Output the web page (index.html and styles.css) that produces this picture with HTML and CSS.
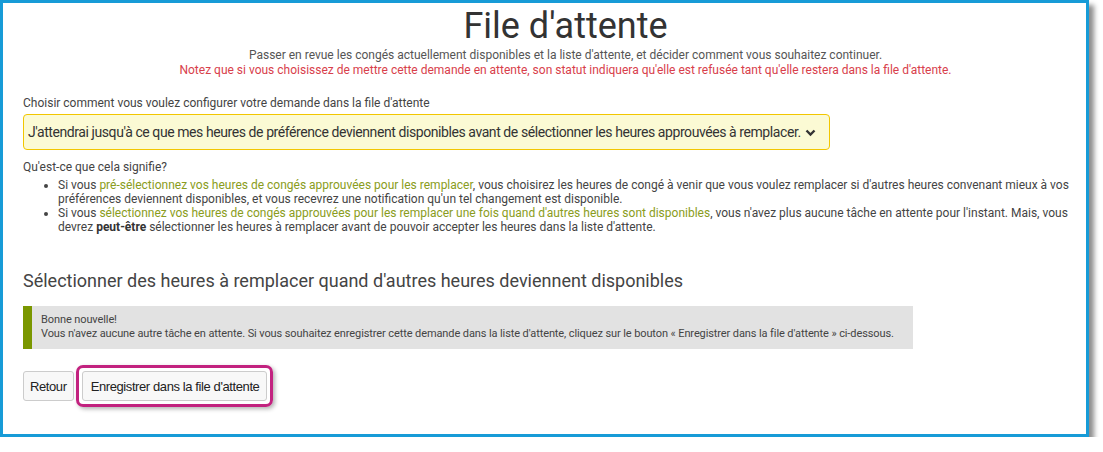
FILE: index.html
```html
<!DOCTYPE html>
<html lang="fr">
<head>
    <meta charset="UTF-8">
    <meta name="viewport" content="width=device-width, initial-scale=1.0">
    <title>File d'attente</title>
    <link rel="stylesheet" href="styles.css">
</head>
<body>
    <div class="frame">
        <div class="header">
            <h1>File d'attente</h1>
            <p class="intro">Passer en revue les congés actuellement disponibles et la liste d'attente, et décider comment vous souhaitez continuer.<br>
            <span class="warn">Notez que si vous choisissez de mettre cette demande en attente, son statut indiquera qu'elle est refusée tant qu'elle restera dans la file d'attente.</span></p>
        </div>

        <p class="label">Choisir comment vous voulez configurer votre demande dans la file d'attente</p>
        <div class="select">
            <span>J'attendrai jusqu'à ce que mes heures de préférence deviennent disponibles avant de sélectionner les heures approuvées à remplacer.</span>
            <svg class="chevron" width="11" height="8" viewBox="0 0 11 8"><path d="M1.5 1.5 L5.5 5.5 L9.5 1.5" fill="none" stroke="#333" stroke-width="2.4"/></svg>
        </div>

        <p class="what">Qu'est-ce que cela signifie?</p>
        <ul class="explain">
            <li>Si vous <span class="hl">pré-sélectionnez vos heures de congés approuvées pour les remplacer</span>, vous choisirez les heures de congé à venir que vous voulez remplacer si d'autres heures convenant mieux à vos préférences deviennent disponibles, et vous recevrez une notification qu'un tel changement est disponible.</li>
            <li>Si vous <span class="hl">sélectionnez vos heures de congés approuvées pour les remplacer une fois quand d'autres heures sont disponibles</span>, vous n'avez plus aucune tâche en attente pour l'instant. Mais, vous devrez <b>peut-être</b> sélectionner les heures à remplacer avant de pouvoir accepter les heures dans la liste d'attente.</li>
        </ul>

        <h2>Sélectionner des heures à remplacer quand d'autres heures deviennent disponibles</h2>

        <div class="alert">
            Bonne nouvelle!<br>
            Vous n'avez aucune autre tâche en attente. Si vous souhaitez enregistrer cette demande dans la liste d'attente, cliquez sur le bouton « Enregistrer dans la file d'attente » ci-dessous.
        </div>

        <div class="actions">
            <button class="btn">Retour</button>
            <span class="ring"><button class="btn">Enregistrer dans la file d'attente</button></span>
        </div>
    </div>
</body>
</html>
```

FILE: styles.css
```css
body { margin: 0; background: #fff; font-family: Roboto, "Liberation Sans", sans-serif; color: #444; }
.frame { box-sizing: border-box; width: 1089px; height: 437px; border: 3px solid #179bd7; padding: 3px 10px 0 20px; background: #fff; box-shadow: 5px 5px 5px rgba(0, 0, 0, 0.45); }

.header { text-align: center; padding-left: 40px; padding-right: 8px; }
h1 { margin: 0; font-size: 36px; line-height: 40px; font-weight: 400; color: #333; }
.intro { margin: 2px 0 0; font-size: 12px; line-height: 15px; color: #555; }
.warn { color: #d8404b; }

.label { margin: 18px 0 3px; font-size: 12px; line-height: 15px; }
.select { box-sizing: border-box; width: 807px; height: 36px; display: flex; align-items: center; gap: 4px; padding: 0 4px; background: #fbfad4; border: 1px solid #f2c600; border-radius: 4px; font-size: 14px; letter-spacing: -0.42px; white-space: nowrap; color: #333; }
.chevron { flex: none; margin-top: 1px; }

.what { margin: 10px 0 0; font-size: 12px; line-height: 15px; }
.explain { margin: 3px 0 0; padding-left: 35px; font-size: 12px; line-height: 14px; }
.explain b { color: #333; }
.hl { color: #8a9c20; }

h2 { margin: 36px 0 0; font-size: 18px; line-height: 22px; font-weight: 400; color: #444; }

.alert { box-sizing: border-box; width: 890px; margin-top: 14px; padding: 7px 10px 8px 9px; background: #e2e2e2; border-left: 9px solid #7a9700; font-size: 11px; line-height: 14px; letter-spacing: -0.1px; color: #444; }

.actions { display: flex; align-items: center; gap: 2px; margin-top: 16px; }
.btn { height: 30px; padding: 0 6px; background: #f8f8f8; border: 1px solid #ccc; border-radius: 3px; font-family: "Liberation Sans", Arial, sans-serif; font-size: 13px; letter-spacing: -0.4px; color: #222; }
.ring .btn { padding: 0 7px 0 8px; }
.ring { display: inline-flex; padding: 3px; border: 3px solid #c2227f; border-radius: 7px; box-shadow: 2px 2px 4px rgba(0, 0, 0, 0.3); }
```
